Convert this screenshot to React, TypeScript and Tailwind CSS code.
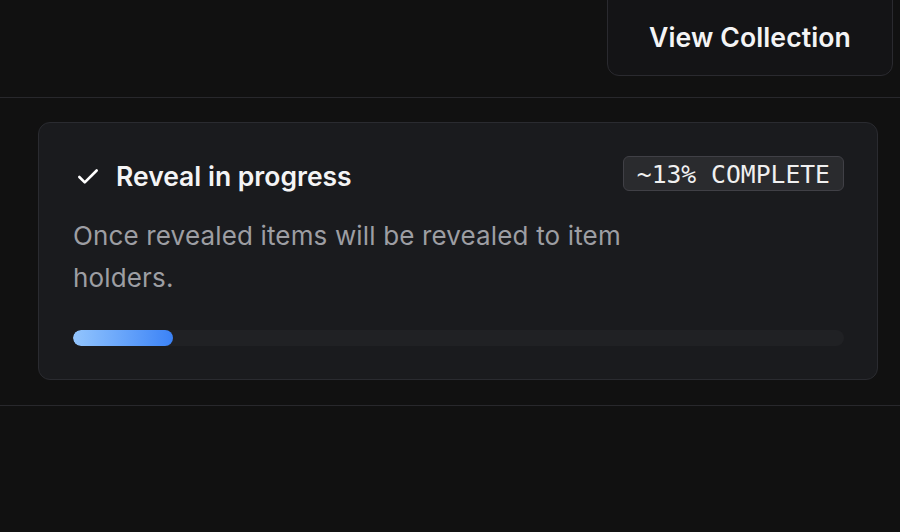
import React from "react";

export default function App() {
  return (
    <div className="w-[900px] h-[532px] bg-[#111111] overflow-hidden text-white" style={{ fontFamily: "Inter, 'Noto Sans', sans-serif" }}>
      <div className="h-[98px] border-b border-[#28282c] flex justify-end pr-[7px]">
        <button className="-mt-[12px] h-[88px] w-[286px] pt-[11px] rounded-[12px] border border-[#2a2a2f] bg-[#141416] flex items-center justify-center text-[26.6px] font-semibold tracking-[0.1px] text-[#f4f4f5]">
          View Collection
        </button>
      </div>
      <div className="h-[308px] border-b border-[#28282c] pt-[24px] pl-[38px] pr-[22px]">
        <div className="h-[258px] rounded-[12px] border border-[#2a2b30] bg-[#1a1b1e] pl-[34px] pr-[33px] pt-[33px]">
          <div className="flex items-start justify-between">
            <div className="flex items-center gap-[15px] pt-[1px]">
              <svg width="26" height="26" viewBox="0 0 24 24" fill="none" stroke="#ffffff" strokeWidth="2.4" strokeLinecap="round" strokeLinejoin="round" className="ml-[2px]">
                <path d="M20 6 9 17l-5-5" />
              </svg>
              <span className="text-[26.5px] font-semibold text-[#f4f4f5]">Reveal in progress</span>
            </div>
            <div className="h-[35px] px-[13px] pt-[4px] rounded-[6px] border border-[#404046] bg-[#2a2b2e] flex items-center text-[24.7px] text-[#f0f0f0] leading-none" style={{ fontFamily: "'DejaVu Sans Mono', 'Liberation Mono', monospace" }}>
              ~13% COMPLETE
            </div>
          </div>
          <p className="mt-[18px] w-[600px] text-[26px] leading-[42px] tracking-[0.15px] text-[#9d9ea3]">
            Once revealed items will be revealed to item holders.
          </p>
          <div className="mt-[31px] h-[16px] rounded-full bg-[#202124] overflow-hidden">
            <div className="h-full rounded-full bg-gradient-to-r from-[#93c5fd] to-[#3b82f6]" style={{ width: "13%" }} />
          </div>
        </div>
      </div>
    </div>
  );
}
